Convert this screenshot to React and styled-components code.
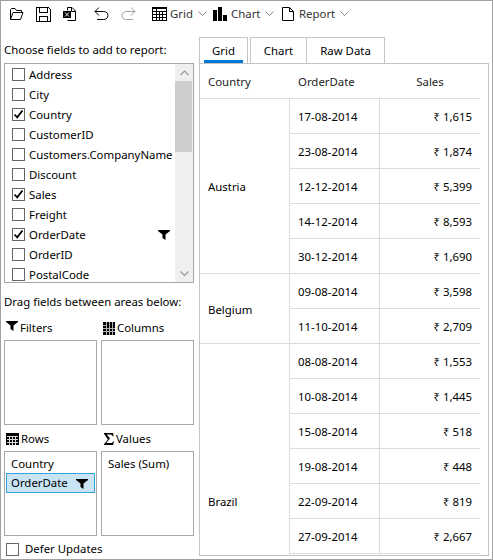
import React from "react"
import styled, { createGlobalStyle } from "styled-components"

const GlobalStyle = createGlobalStyle`
  html, body {
    margin: 0;
    padding: 0;
    background: #ffffff;
  }
`
const Window = styled.div`
  box-sizing: border-box;
  width: 493px;
  height: 560px;
  border: 1px solid #a0a0a0;
  background: #ffffff;
  color: #000000;
  font-family: "Noto Sans", "DejaVu Sans", sans-serif;
  font-size: 11.4px;
  display: flex;
  flex-direction: column;
  overflow: hidden;
`
const Toolbar = styled.div`
  height: 36px;
  flex: none;
  display: flex;
  align-items: center;
  padding: 0 0 10px 8px;
  box-sizing: border-box;
`
const ToolIcon = styled.span`
  display: flex;
  width: ${props => props.$w}px;
  flex: none;
`
const MenuLabel = styled.span`
  width: ${props => props.$w}px;
  flex: none;
  color: #333333;
  margin-top: -2px;
`
const Main = styled.div`
  flex: 1;
  min-height: 0;
  display: flex;
  gap: 5px;
  padding: 0 3px;
`
const LeftColumn = styled.div`
  width: 190px;
  flex: none;
  display: flex;
  flex-direction: column;
`
const Caption = styled.div`
  height: ${props => props.$h}px;
  flex: none;
  display: flex;
  align-items: flex-end;
  line-height: 16px;
  padding-bottom: ${props => props.$pb || 0}px;
  box-sizing: border-box;
`
const FieldBox = styled.div`
  box-sizing: border-box;
  height: 220px;
  flex: none;
  border: 1px solid #a8a8a8;
  display: flex;
  overflow: hidden;
`
const FieldList = styled.div`
  flex: 1;
  min-width: 0;
`
const FieldRow = styled.div`
  height: 20px;
  display: flex;
  align-items: center;
  padding-left: 7px;
  gap: 4px;
`
const FieldName = styled.span`
  flex: 1;
  padding-top: 1px;
`
const Check = styled.span`
  box-sizing: border-box;
  width: 13px;
  height: 13px;
  flex: none;
  border: 1px solid #666666;
  background: #ffffff;
  display: flex;
`
const FieldFilter = styled.span`
  display: flex;
  margin: 2px 5px 0 0;
`
const Scrollbar = styled.div`
  width: 18px;
  flex: none;
  background: #f0f0f0;
  display: flex;
  flex-direction: column;
  align-items: center;
`
const ScrollArrow = styled.div`
  height: 17px;
  display: flex;
  align-items: center;
  flex: none;
`
const ScrollTrack = styled.div`
  flex: 1;
  align-self: stretch;
`
const ScrollThumb = styled.div`
  height: 71px;
  margin-right: 1px;
  background: #cdcdcd;
`
const AreaGrid = styled.div`
  display: grid;
  flex: none;
  grid-template-columns: 93px 93px;
  column-gap: 4px;
`
const AreaTitle = styled.div`
  height: ${props => props.$h}px;
  display: flex;
  align-items: center;
  gap: 2px;
  padding: ${props => props.$h - 20}px 0 4px ${props => props.$pl ?? 2}px;
  box-sizing: border-box;
  line-height: 16px;
`
const TitleFilter = styled.span`
  display: flex;
  margin-bottom: 4px;
`
const AreaBox = styled.div`
  box-sizing: border-box;
  height: 85px;
  border: 1px solid #a8a8a8;
  padding: 3px 1px;
`
const AreaItem = styled.div`
  box-sizing: border-box;
  height: ${props => (props.$selected ? 20 : 18)}px;
  display: flex;
  align-items: center;
  justify-content: space-between;
  padding: 0 6px 2px 4px;
  border: 1px solid ${props => (props.$selected ? "#3aa0dc" : "transparent")};
  background: ${props => (props.$selected ? "#c9e5f5" : "transparent")};
`
const ItemFilter = styled.span`
  display: flex;
  margin-top: 3px;
`
const DeferRow = styled.div`
  display: flex;
  flex: none;
  align-items: center;
  gap: 6px;
  padding: 5px 0 0 2px;
  line-height: 16px;
`
const RightColumn = styled.div`
  width: 290px;
  flex: none;
  display: flex;
  flex-direction: column;
  min-height: 0;
`
const TabStrip = styled.div`
  height: 26px;
  flex: none;
  display: flex;
`
const Tab = styled.div`
  box-sizing: border-box;
  width: ${props => props.$w}px;
  margin-left: ${props => props.$ml || 0}px;
  border: 1px solid #c4c4c4;
  border-bottom: none;
  border-left-width: ${props => (props.$noLeft ? 0 : 1)}px;
  display: flex;
  justify-content: center;
  padding-top: 5px;
  line-height: 16px;
  position: relative;
  ${props =>
    props.$active &&
    `&::after {
      content: "";
      position: absolute;
      left: 4px;
      right: 4px;
      bottom: 0;
      height: 3px;
      background: #0078d7;
    }`}
`
const Panel = styled.div`
  height: 493px;
  flex: none;
  box-sizing: border-box;
  border: 1px solid #c4c4c4;
  overflow: hidden;
`
const Pivot = styled.div`
  width: 280px;
`
const HeaderRow = styled.div`
  display: grid;
  grid-template-columns: 90px 90px 100px;
  height: 35px;
  box-sizing: border-box;
  border-bottom: 1px solid #dcdcdc;
  align-items: center;
`
const HeaderCell = styled.div`
  padding-left: ${props => (props.$center ? 0 : 8)}px;
  text-align: ${props => (props.$center ? "center" : "left")};
  color: #222222;
`
const Group = styled.div`
  display: grid;
  grid-template-columns: 90px 190px;
  height: ${props => props.$rows * 35}px;
  box-sizing: border-box;
  border-bottom: 1px solid #dcdcdc;
`
const GroupName = styled.div`
  display: flex;
  align-items: center;
  padding-left: 8px;
  border-right: 1px solid #dcdcdc;
`
const DataRow = styled.div`
  height: 35px;
  box-sizing: border-box;
  display: grid;
  grid-template-columns: 90px 100px;
  align-items: stretch;
  border-bottom: ${props => (props.$last ? "none" : "1px solid #dcdcdc")};
`
const DateCell = styled.div`
  display: flex;
  align-items: center;
  padding-left: 8px;
  border-right: 1px solid #dcdcdc;
`
const SalesCell = styled.div`
  display: flex;
  align-items: center;
  justify-content: flex-end;
  padding-right: 8px;
`

const Folder = () => (
  <svg width="15" height="14" viewBox="0 0 15 14" fill="none" stroke="#000">
    <path d="M1.5 12.5V2.5L2.5 1.5H6L7.5 3.5H12.5V5.5" />
    <path d="M1.5 12.5H11.5L14 5.5H4L1.5 12.5" />
  </svg>
)
const Save = () => (
  <svg width="15" height="15" viewBox="0 0 15 15" fill="none" stroke="#000" shapeRendering="crispEdges">
    <path d="M0.5 0.5H12.5L14.5 2.5V14.5H0.5Z" />
    <path d="M3.5 0.5V5.5H11.5V0.5" />
    <path d="M3.5 14.5V9.5H11.5V14.5" />
  </svg>
)
const ExportDoc = () => (
  <svg width="15" height="15" viewBox="0 0 15 15" fill="none" stroke="#000">
    <path d="M5.5 3.5V0.5H10L13.5 4V13.5H5.5" />
    <path d="M9.5 0.5V4.5H13.5" />
    <rect x="1" y="4" width="8" height="7" fill="#000" stroke="none" />
    <path d="M3 5.5L7 9.5M7 5.5L3 9.5" stroke="#fff" />
  </svg>
)
const UndoArrow = ({ color, flip }) => (
  <svg width="15" height="14" viewBox="0 0 15 14" fill="none" stroke={color}
    style={flip ? { transform: "scaleX(-1)" } : undefined}>
    <path d="M5 0.5L1 4.5L5 8.5" />
    <path d="M1 4.5H9.5C12.5 4.5 14 6.5 14 8.5C14 10.5 12.5 12.5 9.5 12.5H3" />
  </svg>
)
const GridIcon = () => (
  <svg width="15" height="14" viewBox="0 0 15 14" fill="none" stroke="#000" shapeRendering="crispEdges">
    <rect x="0.5" y="0.5" width="14" height="13" />
    <path d="M0.5 1.5H14.5M0.5 4.5H14.5M0.5 7.5H14.5M0.5 10.5H14.5M4.5 1V14M7.5 4V14M10.5 4V14" />
  </svg>
)
const ChartIcon = () => (
  <svg width="15" height="14" viewBox="0 0 15 14" fill="#000" shapeRendering="crispEdges">
    <rect x="0" y="3" width="4" height="11" />
    <rect x="5" y="0" width="4" height="14" />
    <rect x="10" y="8" width="4" height="6" />
  </svg>
)
const DocIcon = () => (
  <svg width="12" height="14" viewBox="0 0 12 14" fill="none" stroke="#000">
    <path d="M0.5 0.5H7.5L11.5 4.5V13.5H0.5Z" />
    <path d="M7.5 0.5V4.5H11.5" />
  </svg>
)
const Chevron = () => (
  <svg width="9" height="6" viewBox="0 0 9 6" fill="none" stroke="#666666" strokeWidth="0.8">
    <path d="M0.5 0.5L4.5 4.5L8.5 0.5" />
  </svg>
)
const Funnel = () => (
  <svg width="12" height="10" viewBox="0 0 12 10" fill="#000">
    <path d="M0 0H12V1L7.5 4.5V10L4.5 8V4.5L0 1Z" />
  </svg>
)
const ColumnsIcon = () => (
  <svg width="12" height="13" viewBox="0 0 12 13" shapeRendering="crispEdges">
    <rect width="12" height="13" fill="#000" />
    <path d="M3.5 0V13M6.5 0V13M9.5 0V13M0 3.5H3M0 6.5H12M0 9.5H12" stroke="#fff" strokeOpacity="0.7" />
  </svg>
)
const RowsIcon = () => (
  <svg width="13" height="12" viewBox="0 0 13 12" shapeRendering="crispEdges">
    <rect width="13" height="12" fill="#000" />
    <path d="M1 3.5H12M1 6.5H12M1 9.5H12M3.5 3V12M6.5 3V12M9.5 3V12" stroke="#fff" strokeOpacity="0.85" />
  </svg>
)
const SigmaIcon = () => (
  <svg width="10" height="12" viewBox="0 0 11 13" fill="#000">
    <path d="M0 0H10L10.5 3.5H9.5C9 2 8 1.5 6 1.5H3L6.5 6L2.5 11H7C9 11 9.8 10.2 10.2 9H11L10 13H0V12.4L4.3 7L0 0.6Z" />
  </svg>
)
const Tick = () => (
  <svg width="11" height="11" viewBox="0 0 11 11" fill="none" stroke="#000" strokeWidth="1.8">
    <path d="M1.5 5.5L4.2 8.3L9.5 1.5" />
  </svg>
)
const ScrollChevron = ({ down }) => (
  <svg width="9" height="6" viewBox="0 0 9 6" fill="none" stroke="#9a9a9a" strokeWidth="1.2">
    <path d={down ? "M0.5 0.5L4.5 4.5L8.5 0.5" : "M0.5 5L4.5 1L8.5 5"} />
  </svg>
)

const FIELDS = [
  { name: "Address" },
  { name: "City" },
  { name: "Country", checked: true },
  { name: "CustomerID" },
  { name: "Customers.CompanyName" },
  { name: "Discount" },
  { name: "Sales", checked: true },
  { name: "Freight" },
  { name: "OrderDate", checked: true, filtered: true },
  { name: "OrderID" },
  { name: "PostalCode" },
]

const GROUPS = [
  {
    name: "Austria",
    rows: [
      ["17-08-2014", "₹ 1,615"],
      ["23-08-2014", "₹ 1,874"],
      ["12-12-2014", "₹ 5,399"],
      ["14-12-2014", "₹ 8,593"],
      ["30-12-2014", "₹ 1,690"],
    ],
  },
  {
    name: "Belgium",
    rows: [
      ["09-08-2014", "₹ 3,598"],
      ["11-10-2014", "₹ 2,709"],
    ],
  },
  {
    // the group runs on below the visible part of the panel
    name: "Brazil",
    span: 9,
    rows: [
      ["08-08-2014", "₹ 1,553"],
      ["10-08-2014", "₹ 1,445"],
      ["15-08-2014", "₹ 518"],
      ["19-08-2014", "₹ 448"],
      ["22-09-2014", "₹ 819"],
      ["27-09-2014", "₹ 2,667"],
    ],
  },
]

export default function App() {
  return (
    <Window>
      <GlobalStyle />
      <Toolbar>
        <ToolIcon $w={27}><Folder /></ToolIcon>
        <ToolIcon $w={26}><Save /></ToolIcon>
        <ToolIcon $w={32}><ExportDoc /></ToolIcon>
        <ToolIcon $w={27}><UndoArrow color="#000" /></ToolIcon>
        <ToolIcon $w={31}><UndoArrow color="#a0a0a0" flip /></ToolIcon>
        <ToolIcon $w={18}><GridIcon /></ToolIcon>
        <MenuLabel $w={28}>Grid</MenuLabel>
        <ToolIcon $w={15}><Chevron /></ToolIcon>
        <ToolIcon $w={18}><ChartIcon /></ToolIcon>
        <MenuLabel $w={34}>Chart</MenuLabel>
        <ToolIcon $w={17}><Chevron /></ToolIcon>
        <ToolIcon $w={17}><DocIcon /></ToolIcon>
        <MenuLabel $w={41}>Report</MenuLabel>
        <ToolIcon $w={9}><Chevron /></ToolIcon>
      </Toolbar>
      <Main>
        <LeftColumn>
          <Caption $h={26} $pb={5}>Choose fields to add to report:</Caption>
          <FieldBox>
            <FieldList>
              {FIELDS.map(field => (
                <FieldRow key={field.name}>
                  <Check>{field.checked && <Tick />}</Check>
                  <FieldName>{field.name}</FieldName>
                  {field.filtered && <FieldFilter><Funnel /></FieldFilter>}
                </FieldRow>
              ))}
            </FieldList>
            <Scrollbar>
              <ScrollArrow><ScrollChevron /></ScrollArrow>
              <ScrollTrack><ScrollThumb /></ScrollTrack>
              <ScrollArrow><ScrollChevron down /></ScrollArrow>
            </Scrollbar>
          </FieldBox>
          <Caption $h={30} $pb={3}>Drag fields between areas below:</Caption>
          <AreaGrid>
            <div>
              <AreaTitle $h={27}><TitleFilter><Funnel /></TitleFilter>Filters</AreaTitle>
              <AreaBox />
            </div>
            <div>
              <AreaTitle $h={27}><ColumnsIcon />Columns</AreaTitle>
              <AreaBox />
            </div>
            <div>
              <AreaTitle $h={26}><RowsIcon />Rows</AreaTitle>
              <AreaBox>
                <AreaItem>Country</AreaItem>
                <AreaItem $selected>OrderDate<ItemFilter><Funnel /></ItemFilter></AreaItem>
              </AreaBox>
            </div>
            <div>
              <AreaTitle $h={26} $pl={3}><SigmaIcon />Values</AreaTitle>
              <AreaBox>
                <AreaItem>Sales (Sum)</AreaItem>
              </AreaBox>
            </div>
          </AreaGrid>
          <DeferRow>
            <Check />
            Defer Updates
          </DeferRow>
        </LeftColumn>
        <RightColumn>
          <TabStrip>
            <Tab $w={49} $active>Grid</Tab>
            <Tab $w={57} $ml={2}>Chart</Tab>
            <Tab $w={78} $noLeft>Raw Data</Tab>
          </TabStrip>
          <Panel>
            <Pivot>
              <HeaderRow>
                <HeaderCell>Country</HeaderCell>
                <HeaderCell>OrderDate</HeaderCell>
                <HeaderCell $center>Sales</HeaderCell>
              </HeaderRow>
              {GROUPS.map(group => (
                <Group key={group.name} $rows={group.span || group.rows.length}>
                  <GroupName>{group.name}</GroupName>
                  <div>
                    {group.rows.map(([date, sales], i) => (
                      <DataRow key={date} $last={i === group.rows.length - 1 && !group.span}>
                        <DateCell>{date}</DateCell>
                        <SalesCell>{sales}</SalesCell>
                      </DataRow>
                    ))}
                  </div>
                </Group>
              ))}
            </Pivot>
          </Panel>
        </RightColumn>
      </Main>
    </Window>
  )
}
